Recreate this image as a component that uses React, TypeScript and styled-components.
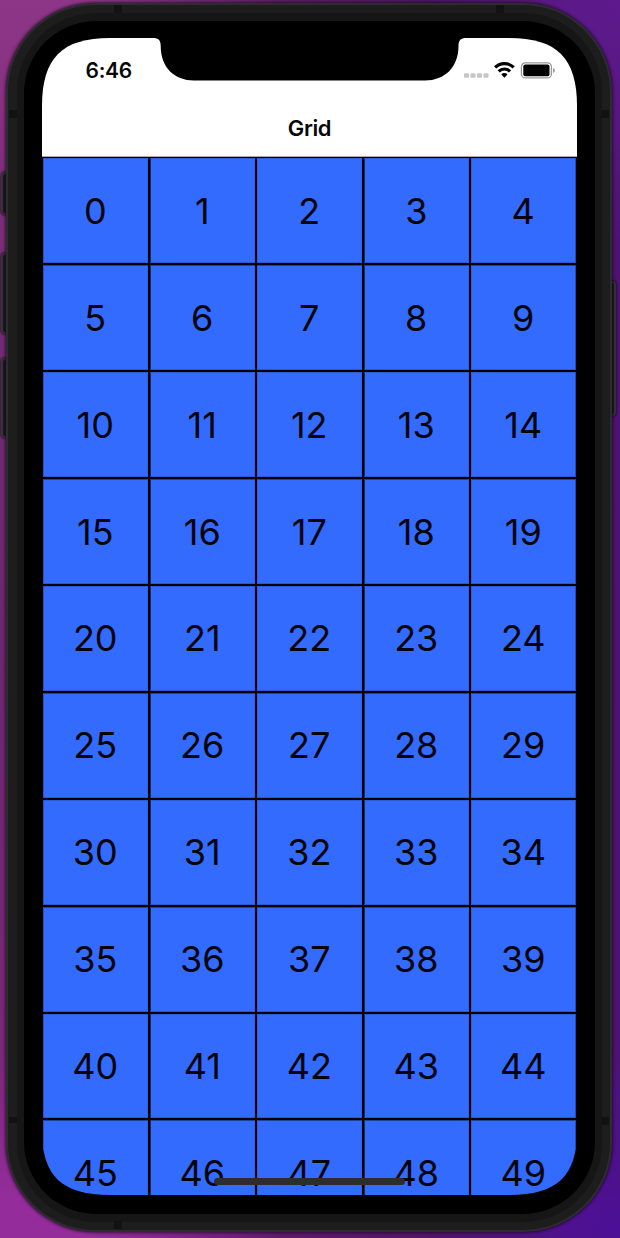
import React from "react";
import styled, { createGlobalStyle } from "styled-components";

const GlobalStyle = createGlobalStyle`
  * { box-sizing: border-box; }
  body { margin: 0; background: #4b1470; }
`;

const Desktop = styled.main`
  display: flex;
  width: 620px;
  height: 1238px;
  overflow: hidden;
  padding: 3px 0 6px;
  font-family: Inter, "Liberation Sans", sans-serif;
  background:
    linear-gradient(90deg, transparent 15%, rgba(25, 0, 45, 0.4) 45%, rgba(25, 0, 45, 0.35) 70%, transparent 92%),
    radial-gradient(circle at 100% 0, #5e1a8d, transparent 240px),
    radial-gradient(circle at 100% 100%, #4c1098, transparent 200px),
    linear-gradient(90deg, transparent 40%, #4c1373 100%),
    linear-gradient(180deg, #8d3688 0, #873180 100px, #742c74 300px, #6c286e 650px, #782877 1050px, #942d9b 1200px);
`;

const ButtonRail = styled.aside<{ $side: "left" | "right" }>`
  display: flex;
  flex-direction: column;
  align-items: ${(p) => (p.$side === "left" ? "flex-start" : "flex-end")};
  width: ${(p) => (p.$side === "left" ? 6 : 8)}px;
  padding: ${(p) => (p.$side === "left" ? "169px 0 0 1px" : "278px 4px 0 0")};
`;

const SideButton = styled.span<{ $height: number; $gap?: number }>`
  flex: none;
  width: 12px;
  height: ${(p) => p.$height}px;
  margin-bottom: ${(p) => p.$gap ?? 0}px;
  border: 2px solid #353336;
  border-radius: 4px;
  background: #1a1a1a;
  box-shadow: 0 0 2px 1px rgba(25, 5, 30, 0.6);
`;

const Frame = styled.div`
  position: relative;
  z-index: 1;
  flex: none;
  width: 606px;
  height: 1229px;
  padding: 2px;
  border-radius: 89px;
  background: #2d2c2e;
  box-shadow: 0 0 3px 1px rgba(20, 0, 25, 0.65);
`;

const Band = styled.div`
  height: 100%;
  padding: 8px 8px 8px 9px;
  border-radius: 87px;
  background: #1d1d1d;
`;

const InnerBand = styled.div`
  height: 100%;
  padding: 8px 7px;
  border-radius: 79px;
  background: #161616;
`;

const Bezel = styled.div`
  height: 100%;
  padding: 17px 17px 18px 18px;
  border-radius: 72px;
  background: #000;
`;

const Antenna = styled.span<{ $x: number; $y: number; $h?: number }>`
  position: absolute;
  left: ${(p) => p.$x}px;
  top: ${(p) => p.$y}px;
  width: 8px;
  height: ${(p) => p.$h ?? 8}px;
  background: #121212;
`;

const Screen = styled.section`
  position: relative;
  display: flex;
  flex-direction: column;
  width: 535px;
  height: 1157px;
  overflow: hidden;
  background: linear-gradient(#fff 119px, #000 119px);
  clip-path: path("M0 68C0 20 20 0 68 0H467C515 0 535 20 535 68V1093C535 1138 515 1157 467 1157H68C20 1157 0 1138 0 1093Z");
`;

const Notch = styled.svg`
  position: absolute;
  left: 108px;
  top: 0;
`;

const StatusBar = styled.div`
  display: flex;
  justify-content: space-between;
  height: 62px;
  padding: 19px 22px 0 43.5px;
`;

const Clock = styled.time`
  padding-top: 1px;
  font-size: 21px;
  line-height: 26px;
  font-weight: 600;
  letter-spacing: -0.3px;
  color: #080808;
`;

const StatusIcons = styled.svg`
  margin-top: 1.5px;
`;

const NavBar = styled.header`
  display: flex;
  align-items: center;
  justify-content: center;
  height: 57px;
  border-bottom: 1px solid #a9a9a9;
`;

const Title = styled.h1`
  margin: 0 0 1px;
  font-size: 22px;
  line-height: 28px;
  font-weight: 600;
  letter-spacing: -0.4px;
  color: #08080a;
`;

const NumberGrid = styled.div`
  display: grid;
  grid-template-columns: repeat(5, 105px);
  grid-template-rows: repeat(4, 105px) 104.5px repeat(3, 105px) 104.5px 105px;
  gap: 2px;
  height: 1038px;
  padding: 1px 1px 0;
  overflow: hidden;
  background: #000;
`;

const Cell = styled.div<{ $edge: string; $top: string; $last: boolean }>`
  display: flex;
  align-items: center;
  justify-content: center;
  padding-right: 0.5px;
  border-left: 1px solid ${(p) => p.$edge};
  border-top: 1px solid ${(p) => p.$top};
  border-right: 1px solid ${(p) => (p.$last ? "#234bb0" : "#2f62ea")};
  border-bottom: 1px solid #2a58d3;
  background: #336bff;
  color: #020409;
  font-size: 36px;
  line-height: 44px;
  font-weight: 400;
`;

const HomeIndicator = styled.span`
  position: absolute;
  left: 172px;
  bottom: 10px;
  width: 191px;
  height: 7px;
  border-radius: 4px;
  background: #2d2d2e;
`;

const numbers = Array.from({ length: 50 }, (_, i) => i);
const columnEdges = ["#2654c8", "#142b68", "#2d5fe2", "#142b68", "#2d5fe2"];

export default function App() {
  return (
    <>
      <GlobalStyle />
      <Desktop>
        <ButtonRail $side="left">
          <SideButton $height={43} $gap={38} />
          <SideButton $height={81} $gap={24} />
          <SideButton $height={80} />
        </ButtonRail>
        <Frame>
          <Band>
            <InnerBand>
              <Bezel>
                <Screen>
                  <StatusBar>
                    <Clock>6:46</Clock>
                    <StatusIcons width="92" height="24" viewBox="0 0 92 24">
                      <g fill="#c6c6c8">
                        <rect x="1" y="14.3" width="5" height="4.5" rx="1" />
                        <rect x="7.5" y="14.3" width="5" height="4.5" rx="1" />
                        <rect x="14" y="14.3" width="5" height="4.5" rx="1" />
                        <rect x="20.5" y="14.3" width="5" height="4.5" rx="1" />
                      </g>
                      <g fill="none" stroke="#000" strokeWidth="3.1">
                        <path d="M32.1 8.4a13.3 13.3 0 0 1 18.6 0" />
                        <path d="M35.7 12.4a8.1 8.1 0 0 1 11.4 0" />
                      </g>
                      <path d="M38.3 15.4a4.4 4.4 0 0 1 6.2 0l-3.1 3.4Z" />
                      <rect x="58.4" y="3.9" width="30" height="15" rx="4" fill="none" stroke="#98989a" strokeWidth="1.3" />
                      <rect x="60.3" y="5.6" width="26.2" height="11.7" rx="2" />
                      <path d="M90 9c1.3.6 1.8 1.4 1.8 2.4s-.5 1.9-1.8 2.5Z" fill="#98989a" />
                    </StatusIcons>
                  </StatusBar>
                  <NavBar>
                    <Title>Grid</Title>
                  </NavBar>
                  <NumberGrid>
                    {numbers.map((n) => (
                      <Cell
                        key={n}
                        $edge={columnEdges[n % 5]}
                        $top={Math.floor(n / 5) % 2 === 1 ? "#1f429e" : "#2c5cdc"}
                        $last={n % 5 === 4}
                      >
                        {n}
                      </Cell>
                    ))}
                  </NumberGrid>
                  <Notch width="319" height="44" viewBox="0 0 319 44">
                    <path d="M0 0H3C8.5 0 10.7 2.3 10.7 8C10.7 29 24 42.5 44 42.5H275C295 42.5 308.5 29 308.5 8C308.5 2.3 310.7 0 316.2 0H319Z" />
                  </Notch>
                  <HomeIndicator />
                </Screen>
              </Bezel>
            </InnerBand>
          </Band>
          <Antenna $x={108} $y={2} />
          <Antenna $x={490} $y={2} />
          <Antenna $x={3} $y={107} />
          <Antenna $x={595} $y={107} />
          <Antenna $x={3} $y={1114} $h={6} />
          <Antenna $x={595} $y={1114} />
          <Antenna $x={108} $y={1218} />
        </Frame>
        <ButtonRail $side="right">
          <SideButton $height={135} />
        </ButtonRail>
      </Desktop>
    </>
  );
}
